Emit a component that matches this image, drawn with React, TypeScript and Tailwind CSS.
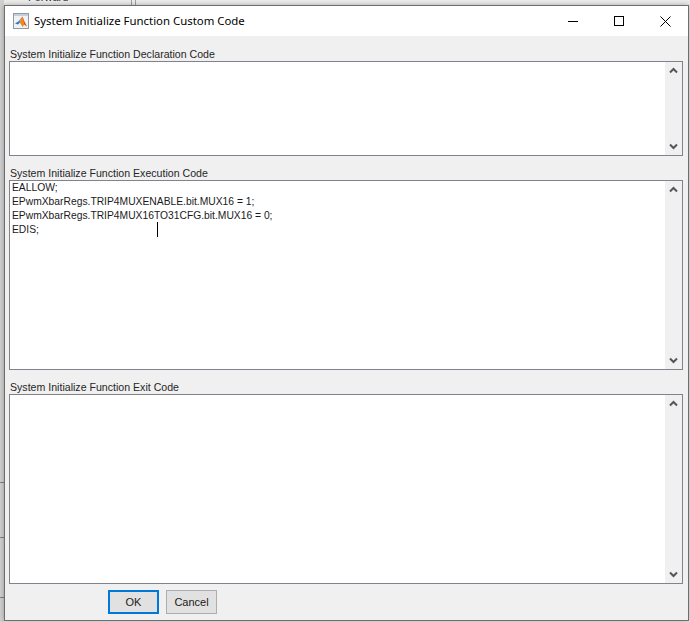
import React from "react";

const CodeBox = ({ label, height, children }: { label: string; height: string; children?: React.ReactNode }) => (
  <div className="flex flex-col">
    <div className="h-[14px] pl-[1px] text-[10.6px] leading-[14px] text-[#262626] whitespace-nowrap">{label}</div>
    <div className={`${height} flex border border-[#82828c] bg-white`}>
      <div className="flex-1 pl-[2px] relative text-[10.3px] leading-[14px] text-[#1a1a1a]">{children}</div>
      <ScrollBar />
    </div>
  </div>
);

const ScrollBar = () => (
  <div className="w-[17px] flex flex-col justify-between bg-[#f0f0f0] py-[5px] items-center">
    <svg width="9" height="7" viewBox="0 0 9 7"><path d="M1 5.5 L4.5 2 L8 5.5" fill="none" stroke="#555" strokeWidth="2" /></svg>
    <svg width="9" height="7" viewBox="0 0 9 7"><path d="M1 1.5 L4.5 5 L8 1.5" fill="none" stroke="#555" strokeWidth="2" /></svg>
  </div>
);

// small window frame with the peak logo inside
const MatlabIcon = () => (
  <svg width="16" height="16" viewBox="0 0 16 16">
    <rect x="0.5" y="0.5" width="15" height="15" fill="#eef1f5" stroke="#8f98a3" />
    <rect x="1" y="1" width="14" height="2" fill="#c3cfdc" />
    <path d="M2 10.5 L6 8 L8 5 L6.5 10 L5 11.5 Z" fill="#2f78c4" />
    <path d="M8 5 L9.5 3.5 L11.5 9 L14 13.5 L11.5 11.5 L9.5 14 L7.5 10.5 L6.5 10 Z" fill="#f08a1d" />
    <path d="M9.5 3.5 L11.5 9 L14 13.5 L11.5 11.5 Z" fill="#c4421a" />
  </svg>
);

export default function App() {
  return (
    <div className="relative w-[690px] h-[622px] overflow-hidden bg-[#ececec] pl-[4px] pt-[5px] font-['Liberation_Sans',Arial,sans-serif]">
      {/* parent window peeking out behind the dialog */}
      <div className="absolute left-[28px] -top-[10px] text-[11px] leading-[14px] text-[#333]">Forward</div>
      <div className="absolute left-[131px] top-0 h-[5px] w-[1px] bg-[#a0a0a0]" />
      <div className="absolute left-[135px] top-0 h-[5px] w-[1px] bg-[#a0a0a0]" />
      <div className="absolute left-0 top-0 h-full w-[4px] bg-[#d0d0d0]" />
      <div className="absolute left-0 top-[482px] h-[1px] w-[4px] bg-[#808080]" />
      <div className="absolute left-0 top-[537px] h-[1px] w-[4px] bg-[#808080]" />
      <div className="absolute left-0 top-[597px] h-[1px] w-[4px] bg-[#808080]" />

      <div className="relative w-[685px] h-[616px] flex flex-col border border-[#6e6e6e] bg-[#f0f0f0] shadow-[0_0_5px_rgba(0,0,0,0.3)]">
        <div className="h-[30px] shrink-0 bg-white flex items-center pl-[8px]">
          <MatlabIcon />
          <span className="ml-[5px] text-[11.4px] text-black font-['Noto_Sans',sans-serif] leading-none">System Initialize Function Custom Code</span>
          <div className="ml-auto flex items-center h-full">
            <div className="w-[46px] h-full flex items-center justify-center">
              <div className="w-[10px] h-[1px] bg-black" />
            </div>
            <div className="w-[46px] h-full flex items-center justify-center">
              <div className="w-[10px] h-[10px] border border-black" />
            </div>
            <div className="w-[46px] h-full flex items-center justify-center">
              <svg width="11" height="11" viewBox="0 0 11 11"><path d="M0.5 0.5 L10.5 10.5 M10.5 0.5 L0.5 10.5" stroke="#000" strokeWidth="1" /></svg>
            </div>
          </div>
        </div>

        <div className="flex-1 flex flex-col pl-[4px] pr-[5px] pt-[11px]">
          <CodeBox label="System Initialize Function Declaration Code" height="h-[95px]" />
          <div className="h-[10px]" />
          <CodeBox label="System Initialize Function Execution Code" height="h-[190px]">
            <div>EALLOW;</div>
            <div>EPwmXbarRegs.TRIP4MUXENABLE.bit.MUX16 = 1;</div>
            <div>EPwmXbarRegs.TRIP4MUX16TO31CFG.bit.MUX16 = 0;</div>
            <div>EDIS;</div>
            <div className="absolute left-[147px] top-[41px] w-[1px] h-[15px] bg-black" />
          </CodeBox>
          <div className="h-[10px]" />
          <CodeBox label="System Initialize Function Exit Code" height="h-[190px]" />
          <div className="flex pl-[99px] pt-[6px] gap-[7px]">
            <button className="w-[51px] h-[24px] pt-[1px] border-2 border-[#0078d7] bg-[#e1e1e1] text-[11px] text-[#1a1a1a]">OK</button>
            <button className="w-[51px] h-[24px] pt-[1px] border border-[#adadad] bg-[#e1e1e1] text-[11px] text-[#1a1a1a]">Cancel</button>
          </div>
        </div>
      </div>
    </div>
  );
}
